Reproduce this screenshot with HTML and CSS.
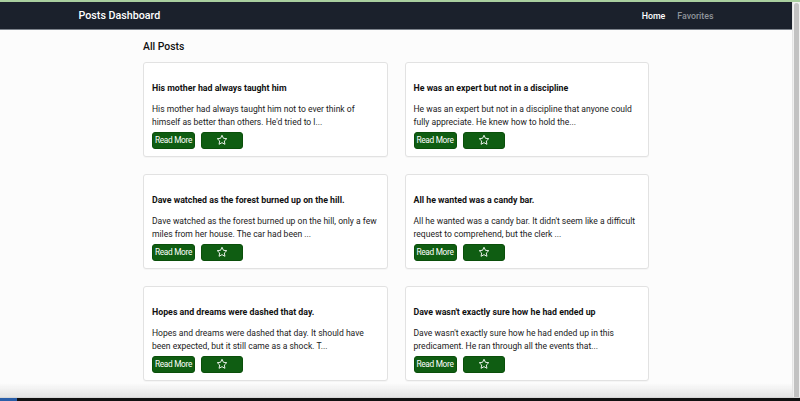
FILE: index.html
```html
<!DOCTYPE html>
<html>
<head>
<meta charset="utf-8">
<link rel="stylesheet" href="styles.css">
</head>
<body>
<div class="topline"></div>
<div class="window">
  <div class="app">
    <nav class="navbar">
      <div class="nav-inner">
        <span class="brand">Posts Dashboard</span>
        <div class="links">
          <a class="link active">Home</a>
          <a class="link">Favorites</a>
        </div>
      </div>
    </nav>
    <main class="content">
      <h2 class="heading">All Posts</h2>
      <div class="grid">
        <div class="card">
          <h3 class="title">His mother had always taught him</h3>
          <p class="body">His mother had always taught him not to ever think of himself as better than others. He'd tried to l...</p>
          <div class="actions"><button class="btn read">Read More</button><button class="btn fav"><svg viewBox="0 0 24 24" width="12" height="12"><path d="M12 2.5l2.9 6.1 6.6.8-4.9 4.6 1.3 6.6L12 17.3l-5.9 3.3 1.3-6.6-4.9-4.6 6.6-.8z" fill="none" stroke="#fff" stroke-width="1.8" stroke-linejoin="round"/></svg></button></div>
        </div>
        <div class="card">
          <h3 class="title">He was an expert but not in a discipline</h3>
          <p class="body">He was an expert but not in a discipline that anyone could fully appreciate. He knew how to hold the...</p>
          <div class="actions"><button class="btn read">Read More</button><button class="btn fav"><svg viewBox="0 0 24 24" width="12" height="12"><path d="M12 2.5l2.9 6.1 6.6.8-4.9 4.6 1.3 6.6L12 17.3l-5.9 3.3 1.3-6.6-4.9-4.6 6.6-.8z" fill="none" stroke="#fff" stroke-width="1.8" stroke-linejoin="round"/></svg></button></div>
        </div>
        <div class="card">
          <h3 class="title">Dave watched as the forest burned up on the hill.</h3>
          <p class="body">Dave watched as the forest burned up on the hill, only a few miles from her house. The car had been ...</p>
          <div class="actions"><button class="btn read">Read More</button><button class="btn fav"><svg viewBox="0 0 24 24" width="12" height="12"><path d="M12 2.5l2.9 6.1 6.6.8-4.9 4.6 1.3 6.6L12 17.3l-5.9 3.3 1.3-6.6-4.9-4.6 6.6-.8z" fill="none" stroke="#fff" stroke-width="1.8" stroke-linejoin="round"/></svg></button></div>
        </div>
        <div class="card">
          <h3 class="title">All he wanted was a candy bar.</h3>
          <p class="body">All he wanted was a candy bar. It didn't seem like a difficult request to comprehend, but the clerk ...</p>
          <div class="actions"><button class="btn read">Read More</button><button class="btn fav"><svg viewBox="0 0 24 24" width="12" height="12"><path d="M12 2.5l2.9 6.1 6.6.8-4.9 4.6 1.3 6.6L12 17.3l-5.9 3.3 1.3-6.6-4.9-4.6 6.6-.8z" fill="none" stroke="#fff" stroke-width="1.8" stroke-linejoin="round"/></svg></button></div>
        </div>
        <div class="card">
          <h3 class="title">Hopes and dreams were dashed that day.</h3>
          <p class="body">Hopes and dreams were dashed that day. It should have been expected, but it still came as a shock. T...</p>
          <div class="actions"><button class="btn read">Read More</button><button class="btn fav"><svg viewBox="0 0 24 24" width="12" height="12"><path d="M12 2.5l2.9 6.1 6.6.8-4.9 4.6 1.3 6.6L12 17.3l-5.9 3.3 1.3-6.6-4.9-4.6 6.6-.8z" fill="none" stroke="#fff" stroke-width="1.8" stroke-linejoin="round"/></svg></button></div>
        </div>
        <div class="card">
          <h3 class="title">Dave wasn't exactly sure how he had ended up</h3>
          <p class="body">Dave wasn't exactly sure how he had ended up in this predicament. He ran through all the events that...</p>
          <div class="actions"><button class="btn read">Read More</button><button class="btn fav"><svg viewBox="0 0 24 24" width="12" height="12"><path d="M12 2.5l2.9 6.1 6.6.8-4.9 4.6 1.3 6.6L12 17.3l-5.9 3.3 1.3-6.6-4.9-4.6 6.6-.8z" fill="none" stroke="#fff" stroke-width="1.8" stroke-linejoin="round"/></svg></button></div>
        </div>
      </div>
    </main>
  </div>
  <div class="scrollbar"><div class="thumb"></div></div>
</div>
<div class="bottom-shade"></div>
<div class="bottom-edge"><div class="dock"></div></div>
</body>
</html>
```

FILE: styles.css
```css
* { box-sizing: border-box; }
html, body { margin: 0; padding: 0; height: 100%; overflow: hidden; }
body {
  font-family: Roboto, "Liberation Sans", Arial, sans-serif;
  background: #fcfcfc;
  color: #111;
}
.topline { height: 2px; background: #a9cf9f; }
.window { display: flex; height: 399px; }
.app { flex: 1; min-width: 0; background: #fcfcfc; }
.scrollbar { width: 8px; background: #f1f1f1; border-left: 1px solid #e4e4e4; padding: 1px 1px 0 1px; }
.thumb { height: 100%; background: #c2c2c2; border-radius: 3px; }
.navbar { height: 28px; background: #1b212c; border-bottom: 1px solid #7d838c; }
.nav-inner { width: 635px; margin: 0 auto; height: 100%; display: flex; align-items: center; justify-content: space-between; }
.brand { color: #fff; font-weight: 500; font-size: 10.7px; }
.links { display: flex; gap: 12px; }
.link { font-size: 8.8px; font-weight: 500; color: #8f949b; }
.link.active { color: #fff; }
.content { width: 506px; margin: 0 auto; }
.heading { font-size: 10.4px; font-weight: 500; margin: 10px 0 8.5px; line-height: 13px; }
.grid { display: grid; grid-template-columns: minmax(0, 1fr) minmax(0, 1fr); column-gap: 17px; row-gap: 17px; }
.card { background: #fff; border: 1px solid #e2e2e2; border-radius: 3px; padding: 9px 8px 8px; height: 95px; box-shadow: 0 1px 1px rgba(0,0,0,0.03); }
.title { font-size: 8.8px; font-weight: 700; margin: 10.5px 0 0; line-height: 13px; color: #111; white-space: nowrap; }
.body { font-size: 8.55px; line-height: 13px; margin: 8px 0 0; color: #1a1a1a; }
.actions { display: flex; gap: 6px; margin-top: 2.5px; }
.btn { height: 17px; border: 1px solid #0a4f0a; border-radius: 3px; background: #0f5d12; color: #fff; padding: 0; display: flex; align-items: center; justify-content: center; font-family: Roboto, "Liberation Sans", Arial, sans-serif; }
.btn.read { width: 43px; font-size: 8.3px; letter-spacing: -0.32px; white-space: nowrap; }
.btn.fav { width: 42px; }
.bottom-shade { position: fixed; left: 0; right: 8px; bottom: 4px; height: 14px; background: linear-gradient(to bottom, rgba(235,235,235,0), rgba(225,225,225,0.9)); pointer-events: none; }
.bottom-edge { position: fixed; left: 0; right: 0; bottom: 0; height: 4px; background: #111; border-top: 1px solid #d8d8d8; }
.dock { width: 17px; height: 3px; background: #2a5ea8; }
```
